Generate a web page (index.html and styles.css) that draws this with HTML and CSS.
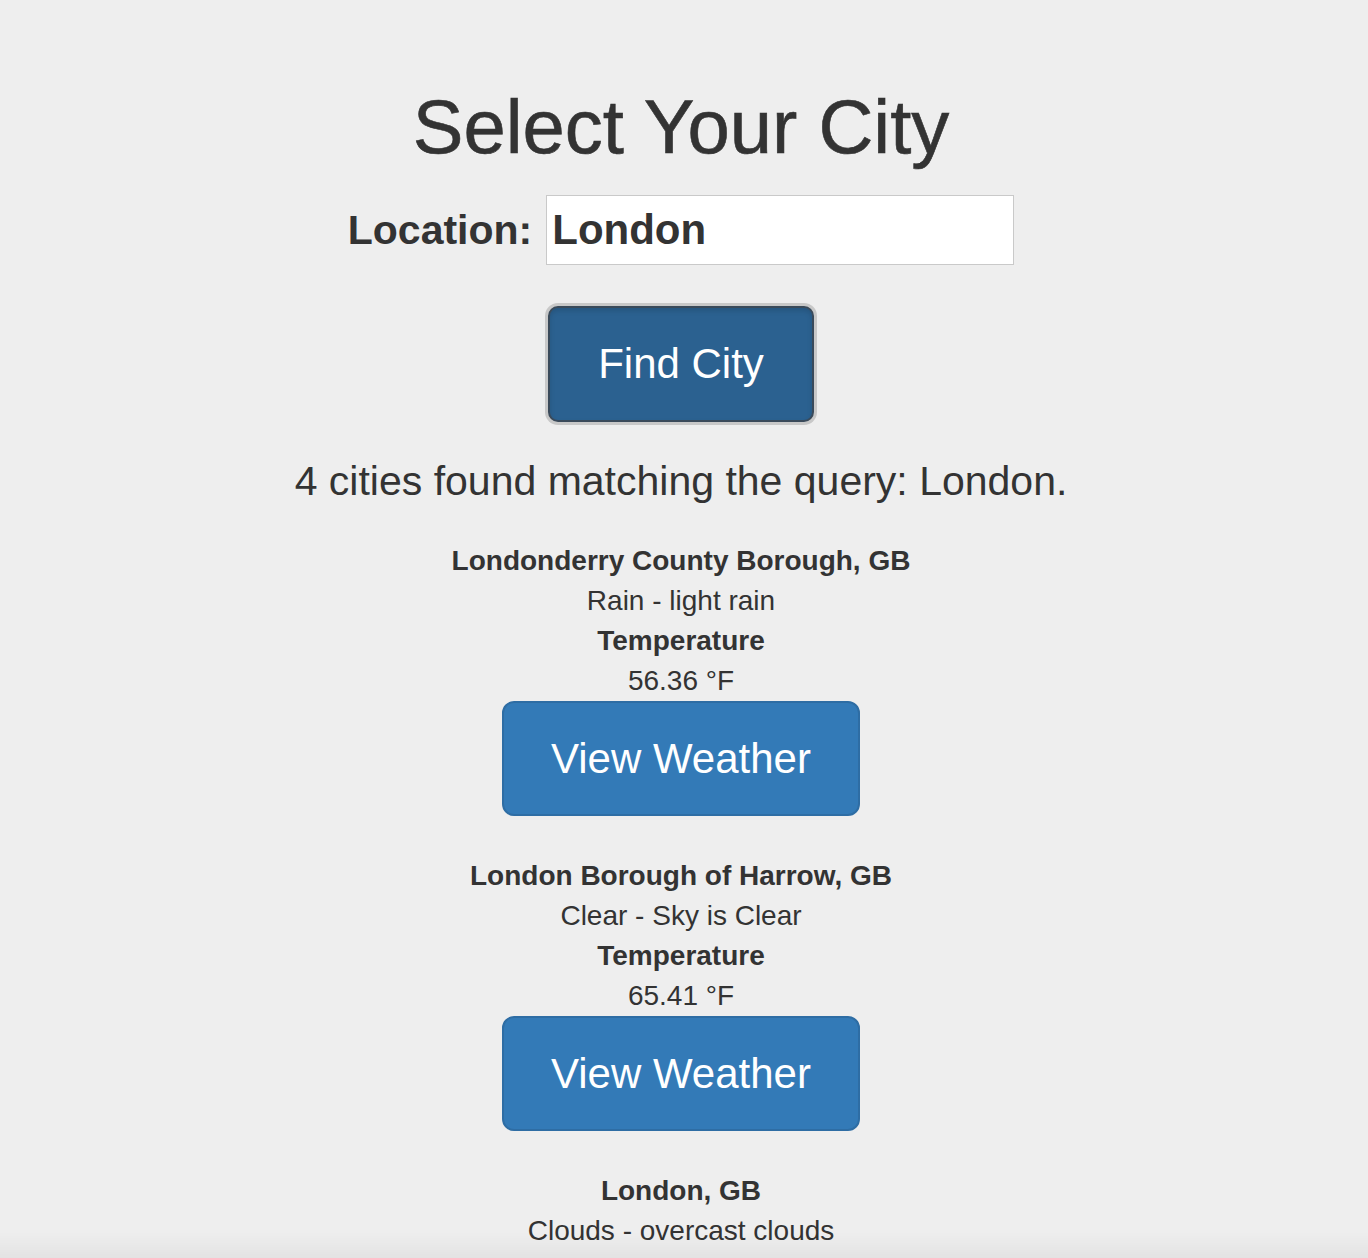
FILE: index.html
```html
<!DOCTYPE html>
<html lang="en">
<head>
<meta charset="utf-8">
<title>Select Your City</title>
<link rel="stylesheet" href="styles.css">
</head>
<body>
<main class="page">
  <h1 class="title">Select Your City</h1>
  <form class="search">
    <label class="search-label" for="loc">Location:</label>
    <input class="search-input" id="loc" type="text" value="London">
  </form>
  <button class="btn-find" type="button">Find City</button>
  <p class="lead">4 cities found matching the query: London.</p>

  <section class="city">
    <div class="city-name">Londonderry County Borough, GB</div>
    <div class="city-line">Rain - light rain</div>
    <div class="city-name">Temperature</div>
    <div class="city-line">56.36 °F</div>
    <button class="btn-view" type="button">View Weather</button>
  </section>

  <section class="city">
    <div class="city-name">London Borough of Harrow, GB</div>
    <div class="city-line">Clear - Sky is Clear</div>
    <div class="city-name">Temperature</div>
    <div class="city-line">65.41 °F</div>
    <button class="btn-view" type="button">View Weather</button>
  </section>

  <section class="city">
    <div class="city-name">London, GB</div>
    <div class="city-line">Clouds - overcast clouds</div>
  </section>
</main>
<div class="bottom-fade"></div>
</body>
</html>
```

FILE: styles.css
```css
html, body {
  margin: 0;
  padding: 0;
  background: #eeeeee;
}

body {
  font-family: "Liberation Sans", Arial, sans-serif;
  color: #333333;
  overflow: hidden;
}

.page {
  max-width: 1362px;
  padding-top: 86px;
  text-align: center;
}

.title {
  margin: 0;
  font-size: 76px;
  line-height: 82px;
  font-weight: normal;
  letter-spacing: 0;
  -webkit-text-stroke: 0.6px #333333;
}

.search {
  margin: 27px 0 0;
  display: flex;
  justify-content: center;
  align-items: center;
  gap: 14px;
}

.search-label {
  font-size: 41px;
  font-weight: bold;
}

.search-input {
  box-sizing: border-box;
  width: 468px;
  height: 70px;
  margin: 0;
  padding: 0 5px;
  border: 1px solid #c9c9c9;
  background: #ffffff;
  font-family: "Liberation Sans", Arial, sans-serif;
  font-size: 42px;
  font-weight: bold;
  color: #333333;
  outline: none;
}

.btn-find {
  display: block;
  box-sizing: border-box;
  width: 266px;
  height: 116px;
  margin: 41px auto 0;
  padding: 0;
  border: 2px solid #3a4a5a;
  border-radius: 10px;
  background: #2b6190;
  color: #ffffff;
  font-family: "Liberation Sans", Arial, sans-serif;
  font-size: 42px;
  line-height: 48px;
  box-shadow: 0 0 0 3px #c8c8c8, inset 0 3px 5px rgba(0, 0, 0, 0.125);
}

.lead {
  margin: 30px 0 30px;
  font-size: 41px;
  line-height: 59px;
  font-weight: normal;
}

.city {
  margin-bottom: 40px;
}

.city-name,
.city-line {
  font-size: 28px;
  line-height: 40px;
}

.city-name {
  font-weight: bold;
}

.btn-view {
  display: block;
  box-sizing: border-box;
  width: 358px;
  height: 115px;
  margin: 0 auto;
  padding: 0;
  border: 2px solid #2e6da4;
  border-radius: 12px;
  background: #337ab7;
  color: #ffffff;
  font-family: "Liberation Sans", Arial, sans-serif;
  font-size: 42px;
  line-height: 48px;
}

.bottom-fade {
  position: fixed;
  left: 0;
  right: 0;
  bottom: 0;
  height: 26px;
  background: linear-gradient(rgba(0, 0, 0, 0), rgba(0, 0, 0, 0.045));
  pointer-events: none;
}
```
